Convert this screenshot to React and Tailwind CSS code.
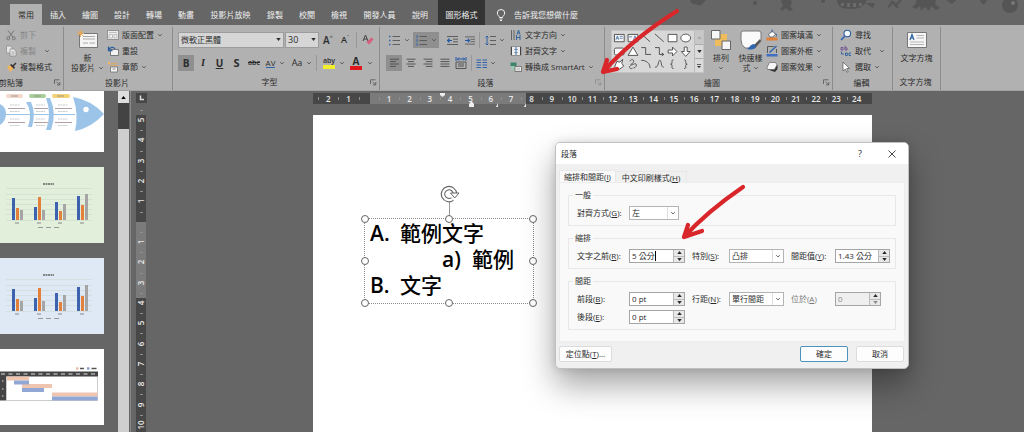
import { useState } from 'react';

const TABS = [
  { label: '常用', width: 'w-8', active: true },
  { label: '插入', width: 'w-8' },
  { label: '繪圖', width: 'w-8' },
  { label: '設計', width: 'w-8' },
  { label: '轉場', width: 'w-8' },
  { label: '動畫', width: 'w-8' },
  { label: '投影片放映', width: 'w-[57px]' },
  { label: '錄製', width: 'w-8' },
  { label: '校閱', width: 'w-8' },
  { label: '檢視', width: 'w-8' },
  { label: '開發人員', width: 'w-[49px]' },
  { label: '說明', width: 'w-8' },
];

const H_TICKS = Array.from({ length: 27 }, (_, i) => Math.abs(i - 2));
const V_TICKS = Array.from({ length: 16 }, (_, i) => Math.abs(i - 5));

const CHART_BARS = [
  [12, 22, 12, 10],
  [34, 13, 23, 10],
  [55, 18, 9, 16],
  [77, 24, 15, 26],
];

const Caret = ({ className = '' }) => (
  <svg viewBox="0 0 6 6" className={`size-[6px] shrink-0 ${className}`} fill="none" stroke="#555" strokeWidth="0.9">
    <path d="M1.2 2.2 3 3.9l1.8-1.7" />
  </svg>
);

const Triangle = ({ up, className = '' }) => (
  <svg viewBox="0 0 6 4" className={`w-[5px] h-[3px] shrink-0 ${className}`} fill="currentColor">
    <path d={up ? 'M0 4h6L3 0z' : 'M0 0h6L3 4z'} />
  </svg>
);

const Divider = ({ className = '' }) => <span className={`w-px h-4 bg-[#989898] shrink-0 ${className}`} />;

const Launcher = ({ faded }) => (
  <button type="button" aria-label="更多選項" className={faded ? 'opacity-40' : ''}>
    <svg viewBox="0 0 7 7" className="size-[7px]" fill="none" stroke="#555" strokeWidth="0.8">
      <path d="M.5 5V.8h5M2.6 2.8l3 3M3 5.9h2.8V3" />
    </svg>
  </button>
);

const Group = ({ label, width, launcher, faded, children }) => (
  <section className={`${width} shrink-0 flex flex-col border-r border-[#8b8b8b] overflow-hidden`}>
    <div className="h-12 flex">{children}</div>
    <div className="h-4 flex items-center pr-[2px]">
      <span className="flex-1 flex justify-center whitespace-nowrap">{label}</span>
      {launcher && <Launcher faded={faded} />}
    </div>
  </section>
);

const RowButton = ({ icon, label, caret, disabled, wide }) => (
  <button
    type="button"
    disabled={disabled}
    className={`h-4 flex items-center gap-[3px] whitespace-nowrap ${disabled ? 'text-[#858585]' : ''}`}
  >
    <svg viewBox="0 0 12 12" className="size-3 shrink-0">{icon}</svg>
    <span>{label}</span>
    {caret && <Caret className={wide ? 'ml-[5px]' : ''} />}
  </button>
);

const Cell = ({ width, active, label, children }) => (
  <button
    type="button"
    aria-label={label}
    className={`${width} h-4 shrink-0 flex items-center justify-center ${active ? 'bg-[#8f8f8f]' : ''}`}
  >
    {children}
  </button>
);

const Lines = ({ rows }) => (
  <svg viewBox="0 0 10 10" className="size-[10px]" stroke="#4c4c4c" strokeWidth="0.9">
    {rows.map(([a, b], i) => (
      <path key={i} d={`M${a} ${1.2 + i * 2.4}H${b}`} />
    ))}
  </svg>
);

const icons = {
  cut: (
    <g fill="none" stroke="#777" strokeWidth="1">
      <path d="M3 1.5 8 8M9 1.5 4 8" />
      <circle cx="3.2" cy="9.3" r="1.5" />
      <circle cx="8.8" cy="9.3" r="1.5" />
    </g>
  ),
  copy: (
    <g fill="#e6e6e6" stroke="#888" strokeWidth="0.7">
      <path d="M1.5 1h4L7 2.500V8H1.500z" />
      <path d="M5 4h4l2 2v5H5z" />
      <path d="M6.500 7h3M6.500 9h3" />
    </g>
  ),
  painter: (
    <g>
      <path d="M2 5.500 6 4l2.500 3.500L5 11z" fill="#f0b45c" />
      <path d="m5 4 4 4 1-1.500L6.500 3z" fill="#333" />
      <path d="m8 5 3-3" stroke="#333" strokeWidth="1.500" />
    </g>
  ),
  layout: (
    <g fill="#eee" stroke="#777" strokeWidth="0.7">
      <path d="M.5 1.500h11v9H.5z" />
      <path d="M2 3.500h8M2 5.500h3.500v3.500H2zM7 5.500h3v3.500H7z" stroke="#aaa" />
    </g>
  ),
  reset: (
    <g fill="none">
      <path d="M3.500 4.500h8v6h-8z" fill="#f3f3f3" stroke="#555" strokeWidth="0.700" />
      <path d="M1.500 1.500v4h4M1.700 5.200C3 2 6.500 1.500 8 4" stroke="#2b5f9e" strokeWidth="1.300" />
    </g>
  ),
  section: (
    <g fill="#f3f3f3" stroke="#666" strokeWidth="0.7">
      <path d="M4 2.500h6.500M2 4.500h9" stroke="#e5a34d" />
      <path d="M3.500 6h7v5h-7zM5.500 8h3" />
      <path d="M1 1h2v2H1z" fill="#f4b860" stroke="none" />
    </g>
  ),
  direction: (
    <g fill="none" stroke="#5b5b5b" strokeWidth="0.9">
      <path d="M1.500 1v10M4 1v10" />
      <path d="M6.500 11V6M10 11V6M7 5.500l1.500-4.500L10 5.500M7.500 4h2M6.500 8.500H10" stroke="#2b5f9e" />
    </g>
  ),
  alignText: (
    <g fill="none">
      <path d="M1 1.500h10v9H1z" fill="#eee" stroke="#777" strokeWidth="0.700" />
      <path d="M1.500 2v8M10.500 2v8" stroke="#444" />
      <path d="M6 2v3M6 7v3M4.500 4 6 5.500 7.500 4M4.500 8 6 6.500 7.500 8" stroke="#2b5f9e" strokeWidth="0.900" />
    </g>
  ),
  smartArt: (
    <g>
      <path d="M.5 1.500h6V5h-6z" fill="#3c8468" />
      <path d="M1.500 5h4v4h-4z" fill="#9cc8b3" />
      <path d="M5 5.500h6.500v5H5z" fill="#eee" stroke="#555" strokeWidth="0.700" />
      <path d="M6.500 7.300h3.500M6.500 8.900h3.500" stroke="#888" strokeWidth="0.500" />
    </g>
  ),
  fill: (
    <g>
      <path d="M.5 8.500h11v3H.5z" fill="#e0813a" />
      <path d="m2.500 5.500 4-3.500 3 3.500-3 2.500H4z" fill="#fff" stroke="#444" strokeWidth="0.700" />
      <path d="M6 .5v3M9.500 4.500c1.500 1 1.200 2 .8 3" stroke="#3b5f9a" fill="none" />
    </g>
  ),
  outline: (
    <g fill="none">
      <path d="M.5 9h11v2.500H.5z" fill="#3f6fc0" />
      <path d="M8 1.500H1.500V8M10.500 4v4" stroke="#444" strokeWidth="0.800" />
      <path d="M3.500 7.500 10.500 1" stroke="#2f65ad" strokeWidth="1.500" />
    </g>
  ),
  effects: (
    <g>
      <path d="m2 8.500 7 2.500 2.500-3V4z" fill="#333" />
      <path d="M3.500 1.500h6L11 4 8.500 8.500H1.500L1 6.500z" fill="#f6f6f6" stroke="#555" strokeWidth="0.600" />
    </g>
  ),
  find: (
    <g>
      <path d="M4.500 7.500 1 11" stroke="#2f65ad" strokeWidth="1.700" />
      <circle cx="7.300" cy="4.500" r="3.300" fill="#f5f9ff" stroke="#2f5f9e" strokeWidth="1.100" />
    </g>
  ),
  replace: (
    <g fill="none" strokeWidth="0.9">
      <path d="M1 2.500h2v2.500H1zM5 .8v4.200h2V2.800H5" stroke="#6c4d8e" />
      <path d="M1.500 6.500V9h2.500M5.500 8h1.800v2.500H5.500zM11 8H9v2.500h2" stroke="#2b5f9e" />
    </g>
  ),
  select: <path d="m3 1 6.500 6.500H6.700l1.500 3.200-1.300.5-1.500-3.100L3 10z" fill="#fff" stroke="#555" strokeWidth="0.7" />,
};

const BIG_FONT = 'text-[8px] leading-[10px]';

const ShapeGallery = () => (
  <div className="mt-[3px] h-[43px] flex border border-[#c4c4c4]">
    <svg viewBox="0 0 82 42" className="w-[82px] bg-[#d8d8d8]" fill="none" stroke="#444" strokeWidth="0.9">
      <path d="M1.500 3.500h10v7.500h-10zM15.500 3.500h10v7.500h-10z" fill="#f5f5f5" />
      <path d="m3 9 1.500-4L6 9M3.600 7.500h2M7 5.500h3M7 7.500h3M21 9l1.500-4L24 9M16.500 6h3" stroke="#2b5f9e" strokeWidth="0.7" />
      <path d="m29 3 9 8M43 3l9 8" />
      <path d="M56.500 3.500h9v7.500h-9z" fill="#fff" />
      <ellipse cx="74.500" cy="7.200" rx="5" ry="4" fill="#fff" />
      <rect x="1.500" y="17.500" width="10" height="7" rx="1.500" fill="#fff" />
      <path d="m20.500 16.500 5 8.500h-10z" fill="#fff" />
      <path d="M29 17h4.500v7H39M43 17h4.500v7h4.500m-2-1.500 2 1.500-2 1.500" />
      <path d="M56.500 19.500h4.500v-3l4.500 4.500-4.500 4.500v-3h-4.500z" fill="#fff" />
      <path d="M73 16.500h3v4.500h3L74.500 26 70 21h3z" fill="#fff" />
      <path d="m2 36 2-5 3 1 3-3-1 4 2 3-4 3H2z" fill="#fff" />
      <path d="M17 31c3-4 6 0 3 2s-3 3 1 1 4 3 0 4m-4-2c0 3 2 3 3 2" />
      <path d="M29 30c5 0 9 3 9 8M43 37c4 1 3-7 5-7s1 8 4 7" />
      <path d="M62 29.500c-2 0-1.500 1.500-1.500 3 0 1-.5 1.500-1.500 1.500 1 0 1.500.5 1.500 1.500 0 1.500-.5 3 1.500 3M73 29.500c2 0 1.500 1.500 1.500 3 0 1 .5 1.500 1.500 1.500-1 0-1.500.5-1.500 1.500 0 1.500.5 3-1.500 3" />
    </svg>
    <div className="w-[9px] flex flex-col border-l border-[#bbb] bg-[#c8c8c8]">
      <button type="button" aria-label="上一列" className="flex-1 border-b border-[#aaa] text-[#aaa] flex items-center justify-center">
        <Triangle up />
      </button>
      <button type="button" aria-label="下一列" className="flex-1 border-b border-[#aaa] bg-[#dadada] flex items-center justify-center">
        <Triangle />
      </button>
      <button type="button" aria-label="更多圖案" className="flex-1 bg-[#dadada] flex items-center justify-center">
        <svg viewBox="0 0 6 6" className="size-[6px]"><path d="M1 1h4v.8H1zM1 3h4L3 5z" fill="#333" /></svg>
      </button>
    </div>
  </div>
);

const Ribbon = () => (
  <div className="h-[66px] shrink-0 pt-[2px] flex bg-[#b1b1b1] text-[#2c2c2c] border-b border-[#a2a2a2]">
    <Group label={<span className="-ml-8">剪貼簿</span>} width="w-16" launcher>
      <div className="pl-[5px]">
        <RowButton icon={icons.cut} label="剪下" disabled />
        <RowButton icon={icons.copy} label="複製" caret wide disabled />
        <RowButton icon={icons.painter} label="複製格式" />
      </div>
    </Group>

    <Group label="投影片" width="w-[109px]">
      <button type="button" className={`w-[43px] pt-[3px] pl-[4px] flex flex-col items-center ${BIG_FONT}`}>
        <svg viewBox="0 0 22 20" className="w-[22px] h-5 shrink-0">
          <path d="M2.500 3.500h18v14h-18z" fill="#f4f4f4" stroke="#777" />
          <path d="M6 6.500h12M6 9h12M6 13h5M12.500 13H18" stroke="#aaa" />
          <path d="M3.500 0v7M0 3.500h7M1 1l5 5M6 1 1 6" stroke="#e8a651" strokeWidth="0.9" />
        </svg>
        <span className="mt-[3px]">新</span>
        <span className="flex items-center gap-[3px] whitespace-nowrap">投影片<Caret /></span>
      </button>
      <div>
        <RowButton icon={icons.layout} label="版面配置" caret />
        <RowButton icon={icons.reset} label="重設" />
        <RowButton icon={icons.section} label="章節" caret />
      </div>
    </Group>

    <Group label={<span className="-ml-1">字型</span>} width="w-[207px]" launcher>
      <div className="pl-[5px] pt-[5px] flex flex-col gap-[7px]">
        <div className="flex items-center h-4">
          <label className="relative flex">
            <select aria-label="字型" className="w-[106px] h-4 pl-[2px] bg-[#d6d6d6] border border-[#9c9c9c] appearance-none">
              <option>微軟正黑體</option>
            </select>
            <Triangle className="absolute right-[3px] top-[6px]" />
          </label>
          <label className="relative flex ml-px">
            <select aria-label="字型大小" className="w-[34px] h-4 pl-[2px] bg-[#d6d6d6] border border-[#9c9c9c] appearance-none text-[9px]">
              <option>30</option>
            </select>
            <Triangle className="absolute right-[3px] top-[6px]" />
          </label>
          <Cell width="w-[18px]" label="放大字型"><span className="text-[10px] font-semibold">A</span><span className="text-[6px] pb-[6px]">^</span></Cell>
          <Cell width="w-[16px]" label="縮小字型"><span className="text-[9px] font-semibold">A</span><span className="text-[5px] pb-[6px]">ˇ</span></Cell>
          <Divider className="mx-[3px]" />
          <Cell width="w-4" label="清除格式">
            <svg viewBox="0 0 12 12" className="size-3">
              <path d="m1 7 2.500-6L6 7M2 5h3" fill="none" stroke="#444" />
              <path d="m4.500 8 5-4.500 2 2-4.500 5z" fill="#d6607c" />
            </svg>
          </Cell>
        </div>
        <div className="flex items-center h-4 text-[10px]">
          <Cell width="w-4" active label="粗體"><b>B</b></Cell>
          <Cell width="w-[18px]" label="斜體"><i className="font-serif font-bold">I</i></Cell>
          <Cell width="w-[15px]" label="底線"><u className="font-bold">U</u></Cell>
          <Cell width="w-[19px]" label="陰影"><b className="text-[11px]">S</b></Cell>
          <Cell width="w-4" label="刪除線"><s className="text-[7px] font-semibold">abc</s></Cell>
          <Cell width="w-[17px]" label="字元間距">
            <span className="text-[8px] leading-[9px] border-b border-[#2f65ad]">AV</span>
          </Cell>
          <Caret className="mr-[3px]" />
          <Cell width="w-[18px]" label="大小寫"><span className="text-[9px]">Aa</span></Cell>
          <Caret />
          <Divider className="mx-1" />
          <Cell width="w-4" label="文字醒目提示色彩">
            <span className="flex flex-col text-[7px] leading-[8px] font-semibold border-b-4 border-[#f4ef2c]">aby</span>
          </Cell>
          <Caret className="ml-[2px]" />
          <Cell width="w-[22px]" label="字型色彩">
            <span className="w-3 text-[10px] leading-[9px] font-bold border-b-4 border-[#e0161b]">A</span>
          </Cell>
          <Caret />
        </div>
      </div>
    </Group>

    <Group label={<span className="-ml-1">段落</span>} width="w-[225px]" launcher faded>
      <div className="w-[130px] pl-[6px] pt-[5px] flex flex-col gap-[7px]">
        <div className="flex items-center h-4">
          <Cell width="w-[16px]" label="項目符號">
            <svg viewBox="0 0 11 11" className="size-[11px]" stroke="#555" strokeWidth="0.9">
              <path d="M3.500 1.500H11M3.500 5.500H11M3.500 9.500H11" />
              <path d="M0 1.500h1.500M0 5.500h1.500M0 9.500h1.500" stroke="#2f65ad" strokeWidth="1.5" />
            </svg>
          </Cell>
          <Caret className="ml-[2px] mr-[3px]" />
          <Cell width="w-[26px]" active label="編號">
            <svg viewBox="0 0 11 11" className="size-[11px]" stroke="#555" strokeWidth="0.9">
              <path d="M3.500 1.500H11M3.500 5.500H11M3.500 9.500H11" />
              <path d="M1 0v3M1 4v3M1 8v3" stroke="#2f65ad" />
            </svg>
            <Caret className="ml-[4px]" />
          </Cell>
          <Cell width="w-[26px]" label="減少縮排">
            <svg viewBox="0 0 11 11" className="size-[11px]" stroke="#555" strokeWidth="0.9" fill="none">
              <path d="M0 1.500h11M6 4.200h5M6 6.800h5M0 9.500h11" />
              <path d="M5 5.500H0M2.500 3.500l-2 2 2 2" stroke="#2458a5" strokeWidth="1.200" />
            </svg>
          </Cell>
          <Cell width="w-[10px]" label="增加縮排">
            <svg viewBox="0 0 11 11" className="size-[11px]" stroke="#555" strokeWidth="0.9" fill="none">
              <path d="M0 1.500h11M6 4.200h5M6 6.800h5M0 9.500h11" />
              <path d="M0 5.500h5M3 3.500l2 2-2 2" stroke="#2458a5" strokeWidth="1.200" />
            </svg>
          </Cell>
          <Divider className="ml-1 mr-[3px]" />
          <Cell width="w-[14px]" label="行距">
            <svg viewBox="0 0 11 11" className="size-[11px]" stroke="#555" strokeWidth="0.9" fill="none">
              <path d="M5 1.500h6M5 5.500h6M5 9.500h6" />
              <path d="M2 1v9M.5 2.500 2 1l1.500 1.500M.5 8.500 2 10l1.500-1.500" stroke="#2458a5" />
            </svg>
          </Cell>
          <Caret className="ml-[2px]" />
        </div>
        <div className="flex items-center h-4">
          <Cell width="w-4" active label="靠左對齊"><Lines rows={[[1, 10], [1, 7], [1, 10], [1, 7]]} /></Cell>
          <Cell width="w-[18px]" label="置中"><Lines rows={[[0.5, 9.5], [2, 8], [0.5, 9.5], [2, 8]]} /></Cell>
          <Cell width="w-[16px]" label="靠右對齊"><Lines rows={[[0.5, 9.5], [3, 9.5], [0.5, 9.5], [3, 9.5]]} /></Cell>
          <Cell width="w-[17px]" label="左右對齊"><Lines rows={[[0.5, 9.5], [0.5, 9.5], [0.5, 9.5], [0.5, 9.5]]} /></Cell>
          <Cell width="w-[15px]" label="分散對齊">
            <svg viewBox="0 0 12 12" className="size-3" fill="none" stroke="#555">
              <path d="M1 5h10v6.500H1zM3 7h6M3 9h6" />
              <path d="M1 0v4M11 0v4M2 2h8M4 .5 2.500 2 4 3.500M8 .5 9.500 2 8 3.500" stroke="#2458a5" />
            </svg>
          </Cell>
          <Divider className="ml-[3px] mr-[2px]" />
          <Cell width="w-[14px]" label="欄">
            <svg viewBox="0 0 11 11" className="size-[11px]" stroke="#2f65ad" strokeWidth="1">
              <path d="M.5 2h4.500M.5 4.500h4.500M.5 7h4.500M.5 9.500h4.500M6.500 2H11M6.500 4.500H11M6.500 7H11M6.500 9.500H11" />
            </svg>
          </Cell>
          <Caret className="ml-[2px]" />
        </div>
      </div>
      <div>
        <RowButton icon={icons.direction} label="文字方向" caret />
        <RowButton icon={icons.alignText} label="對齊文字" caret />
        <RowButton icon={icons.smartArt} label="轉換成 SmartArt" caret />
      </div>
    </Group>

    <Group label={<span className="-ml-1">繪圖</span>} width="w-[228px]" launcher>
      <div className="pl-[6px]"><ShapeGallery /></div>
      <button type="button" className={`w-[34px] pt-[3px] flex flex-col items-center ${BIG_FONT}`}>
        <svg viewBox="0 0 20 20" className="size-5 shrink-0">
          <path d="M4 4h12v12H4z" fill="#eebc5c" />
          <path d="M.5.500h8.500v8.500H.500zM11 11h8.500v8.500H11z" fill="#f6f6f6" stroke="#666" />
        </svg>
        <span className="mt-[3px]">排列</span>
        <Caret className="mt-[2px]" />
      </button>
      <button type="button" className={`w-[25px] pt-[3px] flex flex-col items-center whitespace-nowrap ${BIG_FONT}`}>
        <svg viewBox="0 0 22 20" className="w-[22px] h-5 shrink-0">
          <path d="M3 1h16q2 0 2 2v8l-6 7H5q-4-3-4-8V3q0-2 2-2z" fill="#fafafa" stroke="#777" />
          <path d="m20 9-7 7 2 2 6-7z" fill="#555" />
          <path d="M14 14c-3 0-4 3-7 5 4 1 8 1 9-3z" fill="#2f65ad" />
        </svg>
        <span className="mt-[3px]">快速樣</span>
        <span className="flex items-center gap-[2px]">式<Caret /></span>
      </button>
      <div className="pl-[3px]">
        <RowButton icon={icons.fill} label="圖案填滿" caret />
        <RowButton icon={icons.outline} label="圖案外框" caret />
        <RowButton icon={icons.effects} label="圖案效果" caret />
      </div>
    </Group>

    <Group label="編輯" width="w-[60px]">
      <div className="pl-[7px]">
        <RowButton icon={icons.find} label="尋找" />
        <RowButton icon={icons.replace} label="取代" caret wide />
        <RowButton icon={icons.select} label="選取" caret />
      </div>
    </Group>

    <Group label="文字方塊" width="w-12">
      <button type="button" className={`flex-1 pt-[3px] flex flex-col items-center ${BIG_FONT}`}>
        <svg viewBox="0 0 20 20" className="size-5 shrink-0">
          <path d="M.5 2.500h19v15H.500z" fill="#f6f6f6" stroke="#777" />
          <path d="m3 10 2-5.500L7 10M3.700 8h2.600" fill="none" stroke="#2b5f9e" strokeWidth="1.200" />
          <path d="M9.500 5.500H17M9.500 8H17M3 12h14M3 14.500h14" stroke="#b5b5b5" />
        </svg>
        <span className="mt-[3px]">文字方塊</span>
      </button>
    </Group>
  </div>
);

const Doodles = () => (
  <svg viewBox="0 0 340 26" className="absolute right-0 top-0 w-[340px] h-[26px]" fill="#555">
    <path d="M6 0q1 5 6 4 5 3 7-1l3-3zM153 0c0 6 4 9 14 9s14-4 16-9zM181 3l8 5 2-5z" />
    <circle cx="71" cy="3" r="2" />
    <path d="M97 0h10q2 4-1 6l3 4-4 1-3-3-4 3-2-2 3-3z" />
    <circle cx="139" cy="1" r="2" />
    <path d="m204 7 5-5 3 3 5-5M207 1l7 7" stroke="#555" strokeWidth="2" fill="none" />
    <path d="M232 0q1 4-4 7l4 2 4-3 1 5 4-4 4 4 2-5 5 4 4-2-5-4 1-4z" />
    <path d="m262 0 6 4 4-4zM296 0h7l-2 4h-3z" />
    <circle cx="326" cy="5" r="8" />
    <circle cx="329" cy="3" r="2" fill="#777" />
    <path d="M157 3h3v3h-3zM163 3h3v4h-3zM169 3h3v4h-3zM175 3h3v3h-3z" fill="#6b6b6b" />
  </svg>
);

const TabBar = () => (
  <header className="relative h-[25px] shrink-0 pl-[10px] flex items-stretch text-[#f1f1f1]">
    <Doodles />
    <nav className="flex items-end">
      {TABS.map(({ label, width, active }) => (
        <button
          key={label}
          type="button"
          className={`${width} h-[21px] whitespace-nowrap ${active ? 'bg-[#b1b1b1] text-[#2c2c2c]' : ''}`}
        >
          {label}
        </button>
      ))}
    </nav>
    <button type="button" className="w-[47px] ml-[2px] pt-1 bg-[#343434] whitespace-nowrap">圖形格式</button>
    <button type="button" className="pt-1 ml-[11px] flex items-center gap-2 whitespace-nowrap">
      <svg viewBox="0 0 10 12" className="w-[10px] h-3" fill="none" stroke="#f1f1f1" strokeWidth="1">
        <path d="M3.500 8.500C3.500 7 1.300 6.500 1.300 4a3.700 3.500 0 0 1 7.400 0c0 2.500-2.200 3-2.200 4.500zM3.700 10h2.600M4 11.500h2" />
      </svg>
      告訴我您想做什麼
    </button>
  </header>
);

const BarChartThumb = ({ background }) => (
  <svg viewBox="0 0 104 76" className={`w-[104px] h-[76px] shrink-0 ${background}`}>
    <path d="M6 21.500h86M6 27.500h86M6 32.500h86M6 37.500h86M6 42.500h86M6 47.500h86M6 53.500h86" stroke="#c9d4cf" strokeWidth="0.5" />
    <path d="M43 17h11" stroke="#666" strokeWidth="1.500" strokeDasharray="2 .5" />
    {CHART_BARS.map(([x, a, b, c]) => (
      <g key={x}>
        <rect x={x} y={53 - a} width="3" height={a} fill="#3d62ae" />
        <rect x={x + 4} y={53 - b} width="3" height={b} fill="#e2803c" />
        <rect x={x + 8} y={53 - c} width="3" height={c} fill="#a5a5a5" />
        <path d={`M${x + 3} 56h4`} stroke="#888" />
      </g>
    ))}
    <path d="M38 60.500h5M46 60.500h5M54 60.500h5" stroke="#999" />
  </svg>
);

const FishboneThumb = () => (
  <svg viewBox="0 0 104 61" className="w-[104px] h-[61px] shrink-0 bg-white">
    <path d="M0 13q6 3 6 10t-6 11zM26 11q7 10 2 25h4q4-14-1-25zM46 7q6 16 0 32h5q6-17-1-32zM73 6q18 3 31 17-13 14-29 17 4-17-2-34z" fill="#9cc3e8" />
    <path d="M0 23.500h75" stroke="#9cc3e8" />
    <circle cx="86" cy="18.500" r="2.700" fill="#fff" />
    <rect x="6" y="3" width="17" height="4" rx="2" fill="#f4d8cc" />
    <rect x="29" y="3" width="17" height="4" rx="2" fill="#a9cf9a" />
    <rect x="52" y="3" width="18" height="4" rx="2" fill="#f4d377" />
    <path d="M8 17.500h17M34 17.500h14M55 17.500h17M8 31.500h17M34 31.500h14M55 31.500h17" stroke="#a08a8a" strokeWidth="0.800" />
    <path d="M10 14h10M36 14h9M58 14h10M10 20.500h10M36 20.500h9M58 20.500h10M10 28h10M36 28h9M58 28h10M10 34.500h10M36 34.500h9M58 34.500h10" stroke="#aaa" strokeWidth="0.600" strokeDasharray="2 .5" />
    <path d="M11 5h7M34 5h7M57 5h7" stroke="#888" strokeWidth="0.8" />
  </svg>
);

const GanttThumb = () => (
  <svg viewBox="0 0 104 76" className="w-[104px] h-[76px] shrink-0 bg-white">
    <path d="M76 19.500h2.500" stroke="#edbfa8" strokeWidth="2.500" />
    <path d="M87 19.500h2.500" stroke="#8ba0cf" strokeWidth="2.500" />
    <path d="M80 19.500h4M91.500 19.500h5" stroke="#555" strokeWidth="1.500" />
    <path d="M0 22.500h98v5H6v24H0z" fill="#444" />
    <path d="M1 25h96" stroke="#ddd" strokeDasharray="4 3.500" />
    <path d="M2 32h1.500M2 40h1.500M2 47h1.500" stroke="#ddd" />
    <path d="M6.500 27.500h91v24h-91z" fill="none" stroke="#999" strokeWidth="0.500" />
    <path d="M7 27.500h22v4H7zM22 35h30v4H22zM52 43.500h45.500v4H52z" fill="#f0c5b0" />
    <path d="M14 31.500h15v4H14zM22 39h22v4H22zM52 47.500h45.500v4H52z" fill="#91a7d5" />
  </svg>
);

const Handle = ({ className }) => (
  <span className={`absolute size-[8px] rounded-full bg-white border border-[#666] ${className}`} />
);

const ListItem = ({ marker, text, className = '' }) => (
  <p className={`flex whitespace-nowrap ${className}`}>
    <span className="w-[30px] font-semibold">{marker}</span>
    {text}
  </p>
);

const SlideTextBox = () => (
  <div className="absolute left-[51px] top-[103px] w-[170px] h-[86px] border border-dotted border-[#8a8a8a] pl-[5px] text-[21px] leading-[26px] font-medium text-black">
    <span className="absolute left-[84px] -top-[17px] w-px h-[17px] bg-[#999]" />
    <svg viewBox="0 0 20 18" className="absolute left-[75px] -top-[34px] w-5 h-[18px]" fill="none">
      <path d="M15 9a6 6 0 1 0-2.500 5" stroke="#666" strokeWidth="4.500" />
      <path d="M15 9a6 6 0 1 0-2.500 5" stroke="#fff" strokeWidth="2.300" />
      <path d="M10.500 8h8.500l-4.300 5z" fill="#fff" stroke="#666" />
    </svg>
    <Handle className="-left-1 -top-1" />
    <Handle className="left-[80px] -top-1" />
    <Handle className="-right-1 -top-1" />
    <Handle className="-left-1 top-[38px]" />
    <Handle className="-right-1 top-[38px]" />
    <Handle className="-left-1 -bottom-1" />
    <Handle className="left-[80px] -bottom-1" />
    <Handle className="-right-1 -bottom-1" />
    <ListItem marker="A." text="範例文字" className="pt-px" />
    <ListItem marker="a)" text="範例" className="pl-[72px]" />
    <ListItem marker="B." text="文字" />
  </div>
);

const Workspace = () => (
  <main className="flex-1 min-h-0 flex overflow-hidden">
    <aside className="w-[118px] shrink-0 flex flex-col gap-[15px]">
      <FishboneThumb />
      <BarChartThumb background="bg-[#e2efda]" />
      <BarChartThumb background="bg-[#dfe9f6]" />
      <GanttThumb />
    </aside>
    <div className="w-[11px] shrink-0 flex flex-col bg-[#cfcfcf]">
      <button type="button" aria-label="向上捲動" className="h-3 bg-[#dedede] text-black flex items-center justify-center">
        <Triangle up />
      </button>
      <span className="h-[26px] bg-[#434343]" />
    </div>
    <div className="w-[18px] shrink-0 ml-px pl-[5px] pt-[2px] border-l border-[#8a8a8a]">
      <span className="w-[11px] h-[10px] flex items-center justify-center bg-[#474747]">
        <svg viewBox="0 0 6 6" className="size-[6px]" fill="none" stroke="#ddd" strokeWidth="1.500"><path d="M1.500.5v4H5" /></svg>
      </span>
      <div className="mt-[7px] w-[10px] h-[325px] flex flex-col text-[8px] font-semibold text-[#e8e8e8] bg-[linear-gradient(180deg,#666_5px,#474747_5px,#474747_112px,#7b7b7b_112px,#7b7b7b_188px,#474747_188px)]">
        {V_TICKS.map((n, i) => (
          <span key={i} className="flex-1 min-h-0 flex flex-col items-center justify-between">
            <i className="w-[3px] h-px bg-[#8f8f8f]" />
            <span className="-rotate-90 leading-[10px]">{n || ''}</span>
            <i className="w-px h-px" />
          </span>
        ))}
      </div>
    </div>
    <div className="flex-1 min-w-0 pl-[165px] pr-[152px] pt-[2px] flex flex-col">
      <div className="relative h-[11px] shrink-0 pl-[5px] pr-[5px] flex text-[8px] leading-[11px] font-semibold text-[#e8e8e8] bg-[linear-gradient(90deg,#474747_57px,#7b7b7b_57px,#7b7b7b_213px,#474747_213px)]">
        {H_TICKS.map((n, i) => (
          <span key={i} className="flex-1 min-w-0 flex items-center justify-between">
            <i className="w-px h-[3px] bg-[#8f8f8f]" />
            {n || ''}
            <i className="w-px h-px" />
          </span>
        ))}
        <svg viewBox="0 0 90 14" className="absolute left-[127px] top-0 w-[90px] h-[14px]" fill="#eee">
          <path d="M0 0h5v2L2.500 4 0 2zM29 11l2.500-3 2.500 3v3h-5zM56 14l2-4v4zM84 14l2-4v4z" />
        </svg>
      </div>
      <div className="relative flex-1 mt-[11px] bg-white">
        <SlideTextBox />
      </div>
    </div>
  </main>
);

const Accel = ({ text, letter, colon = true }) => (
  <>{text}(<u>{letter}</u>){colon && ':'}</>
);

const Field = ({ id, text, letter, colon, width, disabled, children }) => (
  <div className="flex items-center">
    <label htmlFor={id} className={`${width} whitespace-nowrap ${disabled ? 'text-[#777]' : ''}`}>
      <Accel text={text} letter={letter} colon={colon} />
    </label>
    {children}
  </div>
);

const Spin = ({ id, initial, width, disabled, caret }) => {
  const [value, setValue] = useState(initial);
  return (
    <div className={`relative ${width} h-[14px] flex border border-[#a5a5a5] ${disabled ? 'bg-[#efefef]' : 'bg-white'}`}>
      <input
        id={id}
        type="text"
        value={value}
        disabled={disabled}
        onChange={(e) => setValue(e.target.value)}
        className={`flex-1 min-w-0 pl-[2px] outline-none ${disabled ? 'text-[#888]' : ''}`}
      />
      {caret && <span className="absolute left-[25px] top-[1px] w-px h-[10px] bg-black" />}
      <div className="w-[11px] flex flex-col gap-px bg-[#bbb] border-l border-[#bbb]">
        <button type="button" aria-label="增加" disabled={disabled} className="flex-1 min-h-0 bg-[#e8e8e8] flex items-center justify-center">
          <Triangle up />
        </button>
        <button type="button" aria-label="減少" disabled={disabled} className={`flex-1 min-h-0 bg-[#e8e8e8] flex items-center justify-center ${disabled ? 'text-[#888]' : ''}`}>
          <Triangle />
        </button>
      </div>
    </div>
  );
};

const Select = ({ id, option, width }) => (
  <div className="relative flex">
    <select id={id} className={`${width} h-[14px] pl-[2px] bg-white border border-[#b4b4b4] appearance-none`}>
      <option>{option}</option>
    </select>
    <span className="absolute right-px top-px h-3 w-[11px] flex items-center justify-center border-l border-[#ddd] pointer-events-none">
      <Caret />
    </span>
  </div>
);

const Section = ({ title, children }) => (
  <fieldset className="min-w-0 border border-[#e8e8e8] pl-2 py-[5px]">
    <legend className="-ml-1 px-[2px] h-3 leading-3">{title}</legend>
    <div className="flex flex-col gap-1">{children}</div>
  </fieldset>
);

const ParagraphDialog = () => (
  <div
    role="dialog"
    aria-label="段落"
    className="absolute left-[555px] top-[142px] w-[354px] rounded-[5px] bg-[#f0f0f0] border border-[#c0c0c0] overflow-hidden text-[8px] leading-[12px] text-[#2a2a2a] shadow-[0_16px_32px_rgba(0,0,0,0.36),0_0_8px_rgba(0,0,0,0.12)]"
  >
    <div className="h-[21px] pl-[5px] pr-3 flex items-center bg-white">
      <h2 className="flex-1">段落</h2>
      <button type="button" aria-label="說明" className="text-[9px]">?</button>
      <button type="button" aria-label="關閉" className="ml-[26px]">
        <svg viewBox="0 0 8 8" className="size-2" stroke="#333" strokeWidth="0.9"><path d="m.5.500 7 7M7.500.500l-7 7" /></svg>
      </button>
    </div>
    <div role="tablist" className="pt-[6px] px-[3px] flex items-end">
      <button type="button" role="tab" aria-selected="true" className="h-3 w-[57px] bg-[#f9f9f9] border-x border-t border-[#e8e8e8] whitespace-nowrap leading-[11px]">
        <Accel text="縮排和間距" letter="I" colon={false} />
      </button>
      <button type="button" role="tab" aria-selected="false" className="h-[11px] w-[71px] border-r border-t border-[#e8e8e8] whitespace-nowrap leading-[11px]">
        <Accel text="中文印刷樣式" letter="H" colon={false} />
      </button>
    </div>
    <div className="mx-[3px] pt-[6px] pb-[11px] px-2 flex flex-col gap-[6px] bg-[#f9f9f9] border border-[#ededed]">
      <Section title="一般">
        <Field id="align" text="對齊方式" letter="G" width="w-[52px]">
          <Select id="align" option="左" width="w-[50px]" />
        </Field>
      </Section>
      <Section title="縮排">
        <div className="flex gap-[7px]">
          <Field id="before-text" text="文字之前" letter="R" width="w-[52px]">
            <Spin id="before-text" initial="5 公分" width="w-14" caret />
          </Field>
          <Field id="special" text="特別" letter="S" width="w-[37px]">
            <Select id="special" option="凸排" width="w-[55px]" />
          </Field>
          <Field id="by" text="間距值" letter="Y" width="w-11">
            <Spin id="by" initial="1.43 公分" width="w-[55px]" />
          </Field>
        </div>
      </Section>
      <Section title="間距">
        <div className="flex gap-[7px]">
          <Field id="before" text="前段" letter="B" width="w-[52px]">
            <Spin id="before" initial="0 pt" width="w-14" />
          </Field>
          <Field id="line" text="行距" letter="N" width="w-[37px]">
            <Select id="line" option="單行間距" width="w-[55px]" />
          </Field>
          <Field id="at" text="位於" letter="A" colon={false} width="w-11" disabled>
            <Spin id="at" initial="0" width="w-[46px]" disabled />
          </Field>
        </div>
        <Field id="after" text="後段" letter="E" width="w-[52px]">
          <Spin id="after" initial="0 pt" width="w-14" />
        </Field>
      </Section>
    </div>
    <div className="pl-[3px] pr-1 pt-1 pb-[6px] flex gap-2">
      <button type="button" className="w-[53px] h-4 mr-auto bg-[#fdfdfd] border border-[#dcdcdc] rounded-[2px]">
        定位點(<u>T</u>)...
      </button>
      <button type="button" className="w-12 h-4 bg-[#fdfdfd] border border-[#4c93bb] rounded-[2px]">確定</button>
      <button type="button" className="w-12 h-4 bg-[#fdfdfd] border border-[#dcdcdc] rounded-[2px]">取消</button>
    </div>
  </div>
);

const Arrow = ({ className, viewBox, d }) => (
  <svg viewBox={viewBox} className={`absolute pointer-events-none ${className}`} fill="none" stroke="#d8262b" strokeWidth="4.2" strokeLinecap="round" strokeLinejoin="round">
    <path d={d} />
  </svg>
);

export default function App() {
  return (
    <div className="relative h-screen flex flex-col overflow-hidden bg-[#666] text-[8px] leading-[12px] font-['Open_Sans','Noto_Sans_CJK_TC',sans-serif]">
      <TabBar />
      <Ribbon />
      <Workspace />
      <ParagraphDialog />
      <Arrow
        className="left-[598px] top-[6px] w-[86px] h-[72px]"
        viewBox="0 0 86 72"
        d="M79 5C55 20 28 40 5 66M9 54 5 66l14-3"
      />
      <Arrow
        className="left-[679px] top-[182px] w-[70px] h-[60px]"
        viewBox="0 0 70 60"
        d="M64 5C45 18 24 34 5 55M9 43 5 55l18-6"
      />
    </div>
  );
}
